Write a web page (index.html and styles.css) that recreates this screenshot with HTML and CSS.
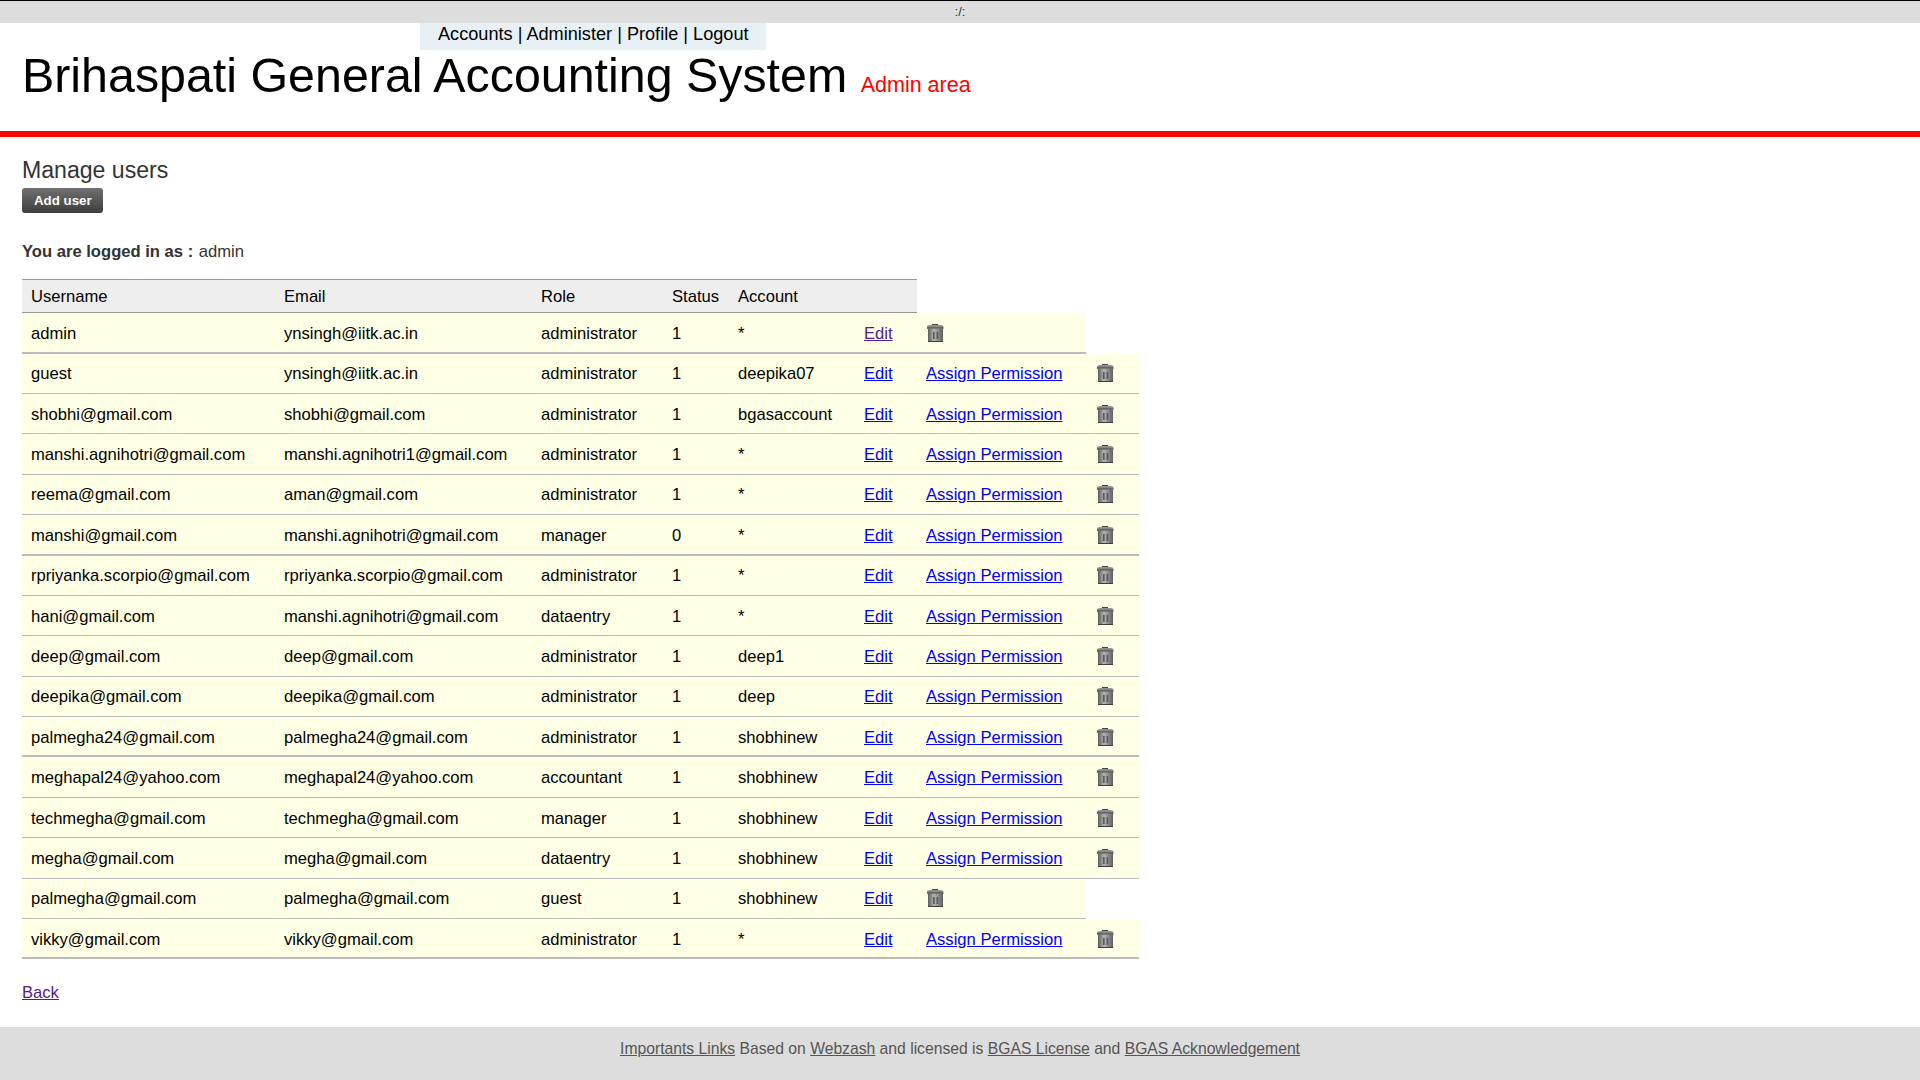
FILE: index.html

```html
<!DOCTYPE html>
<html lang="en">
<head>
  <meta charset="UTF-8" />
  <title>Manage users</title>
  <link rel="stylesheet" href="styles.css">
</head>
<body>
  <svg width="0" height="0" class="defs">
    <defs>
      <linearGradient id="can" x1="0" y1="0" x2="1" y2="0">
        <stop offset="0" stop-color="#5c5c5c" />
        <stop offset="0.4" stop-color="#b4b4b4" />
        <stop offset="1" stop-color="#606060" />
      </linearGradient>
      <linearGradient id="lid" x1="0" y1="0" x2="0" y2="1">
        <stop offset="0" stop-color="#9a9a9a" />
        <stop offset="0.5" stop-color="#808080" />
        <stop offset="1" stop-color="#2e2e2e" />
      </linearGradient>
      <symbol id="trash" viewBox="0 0 18 18">
        <rect x="6" y="0" width="6" height="1.2" fill="#444" />
        <path d="M1 4.8 V3 Q1 1 4 1 H14 Q17.5 1 17.5 3 V4.8 Z" fill="url(#lid)" />
        <path d="M2 4.8 H17 V17 L16.3 18 H2.7 L2 17 Z" fill="url(#can)" />
        <rect x="2" y="17" width="15" height="1" fill="#3e3e3e" />
        <rect x="7" y="8" width="1.6" height="7" fill="#5a5a5a" />
        <rect x="10.6" y="8" width="1.6" height="7" fill="#5a5a5a" />
      </symbol>
    </defs>
  </svg>

  <div class="topbar">:/:</div>

  <div class="header">
    <div class="menu">Accounts | Administer | Profile | Logout</div>
    <h1 class="title">Brihaspati General Accounting System <span class="area">Admin area</span></h1>
  </div>

  <div class="content">
    <h2 class="page-title">Manage users</h2>
    <a class="btn" href="#">Add user</a>
    <p class="logged"><b>You are logged in as :</b> admin</p>

    <table class="users">
      <colgroup>
        <col class="c-user"><col class="c-email"><col class="c-role"><col class="c-status">
        <col class="c-account"><col class="c-edit"><col class="c-perm"><col class="c-del">
      </colgroup>
      <thead>
        <tr><th>Username</th><th>Email</th><th>Role</th><th>Status</th><th>Account</th><th></th></tr>
      </thead>
      <tbody>
        <tr class="thick">
          <td>admin</td><td>ynsingh@iitk.ac.in</td><td>administrator</td><td>1</td><td>*</td>
          <td><a class="seen" href="#">Edit</a></td>
          <td><svg class="icon"><use href="#trash" /></svg></td>
        </tr>
        <tr>
          <td>guest</td><td>ynsingh@iitk.ac.in</td><td>administrator</td><td>1</td><td>deepika07</td>
          <td><a href="#">Edit</a></td><td><a href="#">Assign Permission</a></td>
          <td><svg class="icon"><use href="#trash" /></svg></td>
        </tr>
        <tr>
          <td>shobhi@gmail.com</td><td>shobhi@gmail.com</td><td>administrator</td><td>1</td><td>bgasaccount</td>
          <td><a href="#">Edit</a></td><td><a href="#">Assign Permission</a></td>
          <td><svg class="icon"><use href="#trash" /></svg></td>
        </tr>
        <tr>
          <td>manshi.agnihotri@gmail.com</td><td>manshi.agnihotri1@gmail.com</td><td>administrator</td><td>1</td><td>*</td>
          <td><a href="#">Edit</a></td><td><a href="#">Assign Permission</a></td>
          <td><svg class="icon"><use href="#trash" /></svg></td>
        </tr>
        <tr>
          <td>reema@gmail.com</td><td>aman@gmail.com</td><td>administrator</td><td>1</td><td>*</td>
          <td><a href="#">Edit</a></td><td><a href="#">Assign Permission</a></td>
          <td><svg class="icon"><use href="#trash" /></svg></td>
        </tr>
        <tr class="thick">
          <td>manshi@gmail.com</td><td>manshi.agnihotri@gmail.com</td><td>manager</td><td>0</td><td>*</td>
          <td><a href="#">Edit</a></td><td><a href="#">Assign Permission</a></td>
          <td><svg class="icon"><use href="#trash" /></svg></td>
        </tr>
        <tr>
          <td>rpriyanka.scorpio@gmail.com</td><td>rpriyanka.scorpio@gmail.com</td><td>administrator</td><td>1</td><td>*</td>
          <td><a href="#">Edit</a></td><td><a href="#">Assign Permission</a></td>
          <td><svg class="icon"><use href="#trash" /></svg></td>
        </tr>
        <tr>
          <td>hani@gmail.com</td><td>manshi.agnihotri@gmail.com</td><td>dataentry</td><td>1</td><td>*</td>
          <td><a href="#">Edit</a></td><td><a href="#">Assign Permission</a></td>
          <td><svg class="icon"><use href="#trash" /></svg></td>
        </tr>
        <tr>
          <td>deep@gmail.com</td><td>deep@gmail.com</td><td>administrator</td><td>1</td><td>deep1</td>
          <td><a href="#">Edit</a></td><td><a href="#">Assign Permission</a></td>
          <td><svg class="icon"><use href="#trash" /></svg></td>
        </tr>
        <tr>
          <td>deepika@gmail.com</td><td>deepika@gmail.com</td><td>administrator</td><td>1</td><td>deep</td>
          <td><a href="#">Edit</a></td><td><a href="#">Assign Permission</a></td>
          <td><svg class="icon"><use href="#trash" /></svg></td>
        </tr>
        <tr class="thick">
          <td>palmegha24@gmail.com</td><td>palmegha24@gmail.com</td><td>administrator</td><td>1</td><td>shobhinew</td>
          <td><a href="#">Edit</a></td><td><a href="#">Assign Permission</a></td>
          <td><svg class="icon"><use href="#trash" /></svg></td>
        </tr>
        <tr>
          <td>meghapal24@yahoo.com</td><td>meghapal24@yahoo.com</td><td>accountant</td><td>1</td><td>shobhinew</td>
          <td><a href="#">Edit</a></td><td><a href="#">Assign Permission</a></td>
          <td><svg class="icon"><use href="#trash" /></svg></td>
        </tr>
        <tr>
          <td>techmegha@gmail.com</td><td>techmegha@gmail.com</td><td>manager</td><td>1</td><td>shobhinew</td>
          <td><a href="#">Edit</a></td><td><a href="#">Assign Permission</a></td>
          <td><svg class="icon"><use href="#trash" /></svg></td>
        </tr>
        <tr>
          <td>megha@gmail.com</td><td>megha@gmail.com</td><td>dataentry</td><td>1</td><td>shobhinew</td>
          <td><a href="#">Edit</a></td><td><a href="#">Assign Permission</a></td>
          <td><svg class="icon"><use href="#trash" /></svg></td>
        </tr>
        <tr>
          <td>palmegha@gmail.com</td><td>palmegha@gmail.com</td><td>guest</td><td>1</td><td>shobhinew</td>
          <td><a href="#">Edit</a></td>
          <td><svg class="icon"><use href="#trash" /></svg></td>
        </tr>
        <tr class="thick">
          <td>vikky@gmail.com</td><td>vikky@gmail.com</td><td>administrator</td><td>1</td><td>*</td>
          <td><a href="#">Edit</a></td><td><a href="#">Assign Permission</a></td>
          <td><svg class="icon"><use href="#trash" /></svg></td>
        </tr>
      </tbody>
    </table>

    <p class="back"><a href="#">Back</a></p>
  </div>

  <div class="footer">
    <a href="#">Importants Links</a> Based on <a href="#">Webzash</a> and licensed is <a href="#">BGAS License</a> and <a href="#">BGAS Acknowledgement</a>
  </div>
</body>
</html>
```

FILE: styles.css

```css
html, body {
  height: 100%;
}
body {
  margin: 0;
  padding: 0;
  background: #fff;
  color: #333;
  font-family: "Liberation Sans", Arial, sans-serif;
  font-size: 16.6px;
  display: flex;
  flex-direction: column;
}
.defs {
  position: absolute;
}
.topbar {
  height: 22px;
  line-height: 21px;
  border-top: 1px solid #000;
  background: #ddd;
  font-size: 13px;
  text-align: center;
}
.header {
  height: 108px;
  border-bottom: 6px solid #f00;
  color: #000;
  padding-left: 22px;
}
.menu {
  width: fit-content;
  margin-left: 398px;
  padding: 0 17px 0 18px;
  height: 27px;
  line-height: 22px;
  background: #e6f0f5;
  font-size: 18.15px;
}
.title {
  margin: 0;
  font-size: 48.36px;
  font-weight: normal;
  line-height: 50px;
}
.area {
  font-size: 21.5px;
  color: #f00;
}
.content {
  flex: 1;
  padding: 19px 22px 0;
}
.page-title {
  margin: 0 0 4px;
  font-size: 23.1px;
  font-weight: normal;
  line-height: 28px;
}
.btn {
  display: block;
  width: fit-content;
  padding: 0 11px 0 12px;
  height: 25px;
  line-height: 25px;
  border-radius: 3px;
  background: linear-gradient(#707070, #3e3e3e);
  color: #fff;
  font-size: 13.3px;
  font-weight: bold;
  text-decoration: none;
}
.logged {
  margin: 29px 0 17px;
  line-height: 20px;
}
.logged b {
  margin-right: 1px;
}
.users {
  table-layout: fixed;
  width: 1117px;
  border-collapse: separate;
  border-spacing: 0;
  color: #000;
}
.c-user { width: 253px; }
.c-email { width: 257px; }
.c-role { width: 131px; }
.c-status { width: 66px; }
.c-account { width: 126px; }
.c-edit { width: 62px; }
.c-perm { width: 169px; }
.c-del { width: 53px; }
.users th {
  box-sizing: border-box;
  height: 34.2px;
  padding: 2px 9px 0;
  background: #eee;
  border-top: 1px solid #999;
  border-bottom: 1px solid #999;
  font-weight: normal;
  text-align: left;
}
.users td {
  box-sizing: border-box;
  height: 40.4px;
  padding: 2px 0 0 9px;
  background: #ffffe6;
  border-bottom: 1px solid #bbb;
  white-space: nowrap;
}
.users td:nth-child(8) {
  padding-left: 10px;
}
.users .thick td {
  padding-top: 3px;
  border-bottom-width: 2px;
}
.users a {
  color: #00f;
}
.users a.seen, .back a {
  color: #551a8b;
}
.icon {
  display: block;
  width: 18px;
  height: 18px;
  margin-top: -2px;
}
.back {
  margin: 24px 0 0;
  line-height: 20px;
}
.footer {
  height: 53px;
  padding-top: 12px;
  box-sizing: border-box;
  background: #ddd;
  color: #555;
  font-size: 15.7px;
  text-align: center;
  line-height: 20px;
}
.footer a {
  color: #555;
}
```
